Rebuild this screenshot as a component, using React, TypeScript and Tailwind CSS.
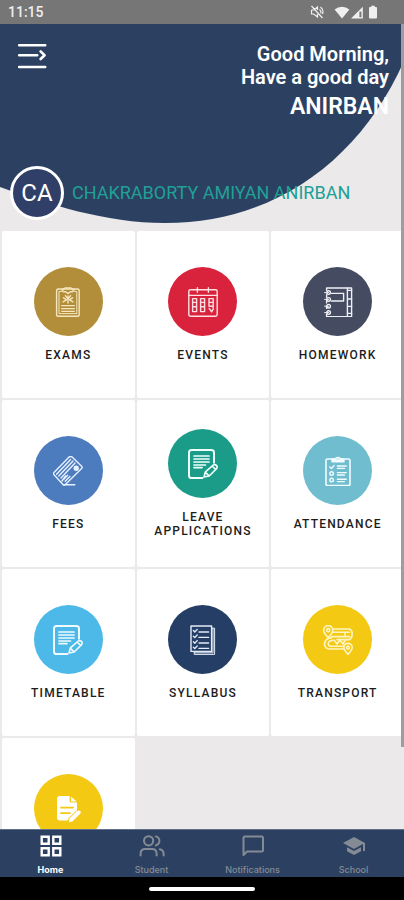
import type { ReactNode } from "react";
import { MdSchool } from "react-icons/md";

function Svg({ children, width = 1.4 }: { children: ReactNode; width?: number }) {
  return (
    <svg
      viewBox="0 0 30 30"
      className="size-[30px]"
      fill="none"
      stroke="currentColor"
      strokeWidth={width}
      strokeLinecap="round"
      strokeLinejoin="round"
      aria-hidden="true"
    >
      {children}
    </svg>
  );
}

const ExamsIcon = () => (
  <Svg>
    <rect x="3.6" y="2" width="22.6" height="27.2" rx="1.8" />
    <path d="M9 4.4H6V26.6H23.8V4.4H21" strokeWidth="1" />
    <path d="M9 2.6 12 1h6l3 1.6-1.6 2.2h-2L15 6.6l-2.4-1.8h-2z" />
    <path d="M15 9v7M10.5 10.8l3 2-3.5 2M19.5 10.8l-3 2 3.5 2M12.4 8.6l2.6 3.6 2.6-3.6" />
    <path d="M8.6 18.6h12.8M8.6 21.6h12.8M8.6 24.4h12.8" strokeWidth="1.2" />
  </Svg>
);

const EventsIcon = () => (
  <Svg>
    <rect x="0.8" y="2.8" width="28.4" height="26.4" rx="1.6" />
    <path d="M0.8 8.4h28.4M9.4 0.8v4.4M20.4 0.8v4.4" />
    <path d="M4.6 11.6h4v3.8h-4zM4.6 15.4h4v4.4h-4zM4.6 19.8h4v4.8h-4zM12.6 11.6h4v3.8h-4zM12.6 15.4h4v4.4h-4zM12.6 19.8h4v4.8h-4zM21 11.6h4.2v3.8H21zM21 15.4h4.2v3.8H21zM25.2 19.2v3l-1.6 2.6M21.2 21.4l2.4 3.4" />
  </Svg>
);

const HomeworkIcon = () => (
  <Svg>
    <path d="M3.6 3.4V1h25v28.6h-25v-2.4" />
    <path d="M24.4 1v28.6M24.4 3.4h4.2M24.4 12h4.2M24.4 19.4h4.2M24.4 26.4h4.2" />
    <path d="M8.6 6.4H20.6V14H8.6" />
    <path d="M3.6 7.6v2.8M3.6 13.4V16M3.6 19v2.4" />
    <path d="M1.6 5.600h4M1.600 12.400h4M1.600 19.200h4M1.600 25.600h4" strokeWidth="1" />
    <circle cx="5.6" cy="5.6" r="1.8" />
    <circle cx="5.6" cy="12.4" r="1.8" />
    <circle cx="5.6" cy="19.2" r="1.8" />
    <circle cx="5.6" cy="25.6" r="1.8" />
  </Svg>
);

const FeesIcon = () => (
  <Svg>
    <path d="M15.6 1.4 1 16.4q-1.2 1.2 0 2.4l9 9.6q1.2 1.2 2.4 0L28.6 12.6q1.2-1.2 0-2.4L19.4 1.2q-1.8-1.6-3.8.2z" />
    <path d="M17.6 3.4 3.6 18.2M20 5 5.8 20M22 7 8 22" />
    <circle cx="23.2" cy="12.2" r="2" fill="currentColor" />
    <path d="M14.6 19.2 11 23M16.8 20.6l-4.6 4.6M10 28.8h11.8M9 25l3.6-5" />
  </Svg>
);

const NoteIcon = () => (
  <Svg width={2}>
    <path d="M14.5 29H3.6Q1 29 1 26.4V3.6Q1 1 3.6 1h19.8Q26 1 26 3.6v10.2" />
    <path d="M6 7h15M6 10h15M6 13h15M6 16h11.5M6 18.6h8" strokeWidth="1.7" />
    <path d="m16 28 1.4-5.2 7.8-6.6q1.8-1.2 3.2.2t.2 3.2l-7.4 7.4zM17.8 23.6l3 3M24.6 17.4l3 3" strokeWidth="1.6" />
  </Svg>
);

const AttendanceIcon = () => (
  <Svg>
    <rect x="3" y="3" width="24" height="26.6" rx="1.6" strokeWidth="1.6" />
    <path d="M9 3v2.8h12V3h-3.4q-.4-1.6-2.6-1.6T12.4 3zM10 4.4h10" strokeWidth="1.4" />
    <path d="m6.8 11 1.6 1.6L11 9.6" />
    <circle cx="8.6" cy="17.6" r="1.8" />
    <circle cx="8.6" cy="24" r="1.8" />
    <path d="M14.4 10h8.8M14.4 12.4h7M14.4 16.6h8.8M14.4 19h7M14.4 23.2h8.8M14.4 25.6h7" />
  </Svg>
);

const SyllabusIcon = () => (
  <Svg>
    <rect x="3" y="1" width="20.6" height="25.4" />
    <path d="M23.6 3.2h3v26.2H6.2v-3M25 3.4v24.4H6.4" strokeWidth="1" />
    <path d="m5.4 5.6 1.4 1.4 2.4-2.6M5.4 11.2l1.4 1.4 2.4-2.6M5.4 16.8l1.4 1.4 2.4-2.6M5.4 22.2l1.4 1.4 2.4-2.6" />
    <path d="M11 7h9.6M11 12.4h9.6M11 18h9.6M11 23.4h9.6" />
  </Svg>
);

const TransportIcon = () => (
  <Svg width={1.6}>
    <path d="M5.2 12.6Q.6 7.6.6 5.2a4.6 4.6 0 0 1 9.2 0q0 2.4-4.6 7.4z" />
    <circle cx="5.2" cy="5.2" r="1.6" />
    <path d="M10 4h16.6q2.6 1.2 2.6 5t-2.6 5.6H14M9.6 7.2H22v4.4H8.6M22 7.2h4.4M22 11.6h4.6" />
    <path d="M8.6 12.6Q2 13.4 1.4 18.8 1.8 24 6.6 24H21M9.4 15.4q-4 .4-4.2 3.2.2 2.6 3 2.6H20" />
    <path d="m11 15 3 4 3-4 3 4 2.4-4" />
    <path d="M25 29.4q-4.2-4.6-4.2-6.8a4.2 4.2 0 0 1 8.4 0q0 2.2-4.2 6.8z" />
    <circle cx="25" cy="22.6" r="1.4" />
  </Svg>
);

const EditNoteIcon = () => (
  <svg viewBox="0 0 30 30" className="size-[30px]" aria-hidden="true">
    <path
      fill="currentColor"
      d="M7 2h9.6v5q0 1.600 1.600 1.600H24v8.800L14.600 26.400H7q-3 0-3-3V5q0-3 3-3zM18 2.400l5.600 5H18zM15.800 28.200l.8-3.400 8.200-8q1.200-.8 2.400.2t.2 2.400l-8 8z"
    />
    <path d="M8 13.600h12M8 19.200h9" className="stroke-[#f3c913]" strokeWidth="1.800" strokeLinecap="round" />
    <path d="m14.800 25.400 8.800-8.600" className="stroke-[#f3c913]" strokeWidth="1" />
  </svg>
);

type Tile = { id: string; label: string; color: string; icon: ReactNode };

const tiles: Tile[] = [
  { id: "exams", label: "EXAMS", color: "bg-[#b28e3a] text-[#f6e6bd]", icon: <ExamsIcon /> },
  { id: "events", label: "EVENTS", color: "bg-[#d9233d] text-[#ffdfe2]", icon: <EventsIcon /> },
  { id: "homework", label: "HOMEWORK", color: "bg-[#454b61] text-[#eef0f5]", icon: <HomeworkIcon /> },
  { id: "fees", label: "FEES", color: "bg-[#4c7bbe] text-[#e6f1ff]", icon: <FeesIcon /> },
  { id: "leave", label: "LEAVE APPLICATIONS", color: "bg-[#1a9c89] text-[#effffb]", icon: <NoteIcon /> },
  { id: "attendance", label: "ATTENDANCE", color: "bg-[#71bdd0] text-[#f0fcff]", icon: <AttendanceIcon /> },
  { id: "timetable", label: "TIMETABLE", color: "bg-[#4cb9e8] text-[#effaff]", icon: <NoteIcon /> },
  { id: "syllabus", label: "SYLLABUS", color: "bg-[#253e66] text-[#e4ebf5]", icon: <SyllabusIcon /> },
  { id: "transport", label: "TRANSPORT", color: "bg-[#f3c913] text-[#fff5c4]", icon: <TransportIcon /> },
  { id: "notes", label: "", color: "bg-[#f3c913] text-white", icon: <EditNoteIcon /> },
];

function TileButton({ tile }: { tile: Tile }) {
  return (
    <button
      type="button"
      aria-label={tile.label || "Notes"}
      className="flex h-[167px] min-w-0 flex-col items-center justify-center gap-3 rounded-xs bg-white"
    >
      <span className={`flex size-[69px] shrink-0 items-center justify-center rounded-full ${tile.color}`}>
        {tile.icon}
      </span>
      <span className="min-h-3.5 max-w-28 text-center text-[12px] leading-3.5 font-medium tracking-widest text-[#1c1c1c]">
        {tile.label}
      </span>
    </button>
  );
}

function StatusBar() {
  return (
    <div className="flex h-6 shrink-0 items-center justify-between bg-[#767676] pr-[26px] pl-2 text-[#efefef]">
      <span className="text-[14px] leading-6 font-medium">11:15</span>
      <div className="flex items-center">
        <svg viewBox="0 0 14 14" className="mr-2.5 size-3.5" fill="none" stroke="currentColor" strokeWidth="1.2" aria-hidden="true">
          <path d="M1.500 5h2.200l3.800-3v3M7.500 9v3l-3.800-3H1.500V5M9.500 4.500q2 1.500 1.200 4M10.500 2q3.500 3 2 7M1.500 1l11 12" />
        </svg>
        <svg viewBox="0 0 16 13" className="h-[13px] w-4" fill="currentColor" aria-hidden="true">
          <path d="M8 12.600.6 3.600Q4 .8 8 .8t7.400 2.800z" />
        </svg>
        <svg viewBox="0 0 14 13" className="h-[13px] w-3.5" aria-hidden="true">
          <path d="M1 12.400 12.800.8v11.600z" fill="currentColor" />
          <path d="M9.400 5.600h2v5.600h-2z" fill="#767676" />
        </svg>
        <svg viewBox="0 0 10 14" className="ml-1 h-3.5 w-2.5" fill="currentColor" aria-hidden="true">
          <path d="M3.200.8h3.600V2H8q1 0 1 1v9.400q0 1-1 1H2q-1 0-1-1V3q0-1 1-1h1.200z" />
        </svg>
      </div>
    </div>
  );
}

function Header() {
  return (
    <header className="relative isolate h-[207px] shrink-0">
      <svg
        viewBox="0 0 404 207"
        preserveAspectRatio="none"
        className="absolute inset-0 -z-10 size-full"
        aria-hidden="true"
      >
        <path d="M0 0H404V37C360 136 275 199 165 199C105 199 48 180 0 163Z" fill="#2c4161" />
      </svg>
      <div className="flex items-start justify-between pt-[19px] pr-[15px] pl-[17px]">
        <button type="button" aria-label="Open menu" className="text-white">
          <svg viewBox="0 0 30 28" className="h-7 w-[30px]" fill="none" stroke="currentColor" strokeWidth="2.600" strokeLinecap="round" strokeLinejoin="round" aria-hidden="true">
            <path d="M2.200 2.200h26M2.200 12.200h18M2.200 24h26M23.600 8.400l4 3.800-4 3.800" />
          </svg>
        </button>
        <div className="text-right font-semibold text-white">
          <p className="text-[20px] leading-[23px]">Good Morning,</p>
          <p className="text-[20px] leading-[23px]">Have a good day</p>
          <p className="mt-1 text-[23px] leading-7">ANIRBAN</p>
        </div>
      </div>
      <div className="mt-[45px] flex items-center gap-2 pl-2.5">
        <span className="flex size-[54px] items-center justify-center rounded-full border-[3px] border-white bg-[#303f68] text-[24px] leading-none text-white">
          CA
        </span>
        <span className="text-[18px] leading-6 text-[#20a096]">CHAKRABORTY AMIYAN ANIRBAN</span>
      </div>
    </header>
  );
}

const navItems = [
  {
    label: "Home",
    icon: (
      <svg viewBox="0 0 24 24" className="size-6" fill="none" stroke="currentColor" strokeWidth="2.400" aria-hidden="true">
        <path d="M2.700 2.700h7v7h-7zM14.300 2.700h7v7h-7zM2.700 14.300h7v7h-7zM14.300 14.300h7v7h-7z" />
      </svg>
    ),
  },
  {
    label: "Student",
    icon: (
      <svg viewBox="0 0 26 24" className="h-6 w-[26px]" fill="none" stroke="currentColor" strokeWidth="2" strokeLinecap="round" aria-hidden="true">
        <circle cx="9.600" cy="6.800" r="4.600" />
        <path d="M1.600 21.600v-2q0-4.600 4.600-4.600H13q4.600 0 4.600 4.600v2M16.800 2.400q3.600 1 3.600 4.400t-3.600 4.600M20.800 15.200q3.800 1 3.800 4.600v1.800" />
      </svg>
    ),
  },
  {
    label: "Notifications",
    icon: (
      <svg viewBox="0 0 24 24" className="size-6" fill="none" stroke="currentColor" strokeWidth="2" strokeLinejoin="round" aria-hidden="true">
        <path d="M4 2.500h16.500q1.500 0 1.500 1.500v12q0 1.500-1.500 1.500H6L2.500 21V4q0-1.500 1.500-1.500z" />
      </svg>
    ),
  },
  { label: "School", icon: <MdSchool className="size-6" aria-hidden="true" /> },
];

function BottomNav() {
  return (
    <nav className="grid h-12 shrink-0 grid-cols-4 border-t border-[#60708a] bg-[#2c4161]">
      {navItems.map((item, index) => (
        <a
          key={item.label}
          href={`#${item.label.toLowerCase()}`}
          aria-current={index === 0 ? "page" : undefined}
          className={`flex flex-col items-center gap-1.5 pt-1 font-['Inter',sans-serif] text-[9px] leading-3 ${
            index === 0 ? "font-bold text-white" : "font-medium text-[#858b94]"
          }`}
        >
          {item.icon}
          {item.label}
        </a>
      ))}
    </nav>
  );
}

export default function App() {
  return (
    <div className="flex h-screen flex-col bg-[#ebe9e9] font-['Roboto',sans-serif]">
      <StatusBar />
      <main className="relative flex min-h-0 flex-1 flex-col overflow-hidden">
        <Header />
        <div className="grid shrink-0 grid-cols-3 gap-[2px] pl-[2px]">
          {tiles.map((tile) => (
            <TileButton key={tile.id} tile={tile} />
          ))}
        </div>
        <div className="absolute top-0 right-0 h-[723px] w-[3px] bg-[#9d9d9d]" aria-hidden="true" />
      </main>
      <BottomNav />
      <div className="flex h-[23px] shrink-0 items-center justify-center bg-black">
        <div className="h-1 w-[106px] rounded-full bg-white" />
      </div>
    </div>
  );
}
